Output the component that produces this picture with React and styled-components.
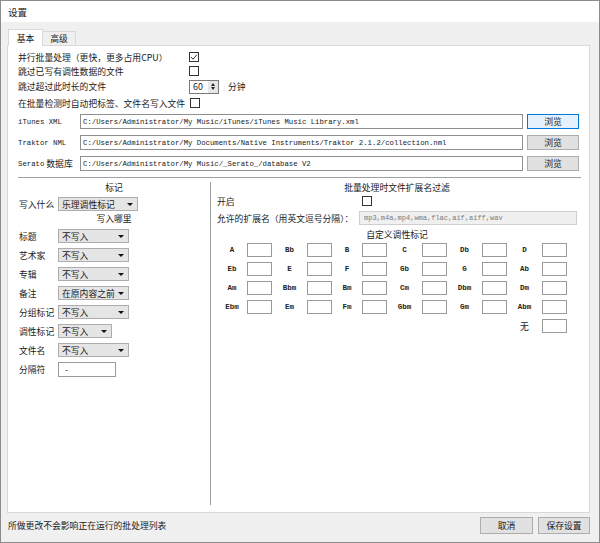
import styled, { createGlobalStyle } from "styled-components"

const GlobalStyle = createGlobalStyle`
html, body {
  margin: 0;
  padding: 0;
  background: #f0f0f0;
}
body {
  font-family: "Noto Sans CJK SC", "Noto Sans", sans-serif;
  font-size: 8.8px;
  color: #1a1a1a;
}
`

const Window = styled.div`
width: 600px;
height: 543px;
box-sizing: border-box;
border: 1px solid #8c8c8c;
background: #f0f0f0;
display: flex;
flex-direction: column;
`
const TitleBar = styled.div`
height: 21px;
flex: none;
background: #fff;
display: flex;
align-items: center;
padding-left: 7px;
font-size: 9.5px;
`
const Body = styled.div`
flex: 1;
display: flex;
flex-direction: column;
padding: 0 9px 0 6px;
min-height: 0;
`
const TabStrip = styled.div`
height: 23px;
flex: none;
display: flex;
align-items: flex-end;
padding-left: 1px;
`
const Tab = styled.div`
box-sizing: border-box;
height: ${p => (p.$active ? "17px" : "14px")};
width: ${p => (p.$active ? "35px" : "33px")};
background: ${p => (p.$active ? "#fff" : "#f0f0f0")};
border: 1px solid #d9d9d9;
border-bottom: none;
border-left: ${p => (p.$active ? "1px solid #d9d9d9" : "none")};
margin-bottom: ${p => (p.$active ? "-1px" : "0")};
position: relative;
z-index: ${p => (p.$active ? 1 : 0)};
display: flex;
align-items: center;
justify-content: center;
`
const Panel = styled.div`
flex: 1;
background: #fff;
border: 1px solid #d9d9d9;
display: flex;
flex-direction: column;
padding: 4px 10px 0 10px;
min-height: 0;
`
const Options = styled.div`
display: grid;
grid-template-columns: 171px auto;
grid-template-rows: 14px 14px 17px 16px;
align-items: center;
justify-items: start;
`
const Check = styled.div`
width: 10px;
height: 10px;
box-sizing: border-box;
border: 1px solid #333;
background: #fff;
margin-left: ${p => p.$offset || 0}px;
display: flex;
align-items: center;
justify-content: center;
`
const SpinRow = styled.div`
display: flex;
align-items: center;
`
const Spin = styled.div`
width: 30px;
height: 14px;
box-sizing: border-box;
border: 1px solid #7a7a7a;
display: flex;
align-items: center;
padding-left: 3px;
`
const SpinValue = styled.span`
flex: 1;
`
const SpinArrows = styled.div`
width: 10px;
height: 12px;
background: #e6e6e6;
display: flex;
flex-direction: column;
align-items: center;
justify-content: center;
gap: 1px;
`
const Arrow = styled.div`
width: 0;
height: 0;
border-left: 2.5px solid transparent;
border-right: 2.5px solid transparent;
border-top: ${p => (p.$up ? "none" : "3px solid #222")};
border-bottom: ${p => (p.$up ? "3px solid #222" : "none")};
`
const Unit = styled.span`
margin-left: 9px;
`
const PathRows = styled.div`
display: flex;
flex-direction: column;
gap: 6px;
margin-top: 3px;
`
const PathRow = styled.div`
height: 15px;
display: flex;
align-items: center;
`
const Mono = styled.span`
font-family: "Liberation Mono", monospace;
font-size: 7.3px;
`
const PathLabel = styled.div`
width: 62px;
flex: none;
display: flex;
align-items: center;
gap: 2px;
white-space: nowrap;
`
const PathInput = styled.div`
flex: 1;
height: 15px;
box-sizing: border-box;
border: 1px solid #8f8f8f;
padding: 0 2px;
display: flex;
align-items: center;
white-space: nowrap;
overflow: hidden;
font-family: "Liberation Mono", monospace;
font-size: 7.3px;
`
const Button = styled.div`
width: ${p => p.$width}px;
height: ${p => p.$height || 15}px;
box-sizing: border-box;
margin-left: ${p => p.$gap || 0}px;
background: ${p => (p.$focus ? "#e5f1fb" : "#e1e1e1")};
border: 1px solid ${p => (p.$focus ? "#0078d7" : "#adadad")};
display: flex;
align-items: center;
justify-content: center;
flex: none;
`
const HLine = styled.div`
margin-top: 6px;
margin-right: -2px;
border-top: 1px solid #a0a0a0;
`
const Lower = styled.div`
flex: 1;
display: flex;
padding-bottom: 7px;
min-height: 0;
`
const LeftCol = styled.div`
width: 192px;
flex: none;
display: flex;
flex-direction: column;
padding-top: 3px;
`
const VLine = styled.div`
width: 0;
border-left: 1px solid #a0a0a0;
margin-top: 4px;
`
const RightCol = styled.div`
flex: 1;
display: flex;
flex-direction: column;
padding: 3px 2px 0 6px;
`
const SectionTitle = styled.div`
height: 14px;
line-height: 14px;
text-align: center;
margin-top: ${p => p.$mt || 0}px;
`
const FieldRow = styled.div`
height: 14px;
display: flex;
align-items: center;
margin-top: ${p => p.$mt || 0}px;
`
const FieldLabel = styled.div`
width: 39px;
padding-left: 1px;
flex: none;
white-space: nowrap;
`
const Select = styled.div`
width: ${p => p.$width}px;
height: 14px;
box-sizing: border-box;
background: #e5e5e5;
border: 1px solid #adadad;
padding: 0 4px 0 3px;
display: flex;
align-items: center;
justify-content: space-between;
`
const Caret = styled.div`
width: 0;
height: 0;
border-left: 3px solid transparent;
border-right: 3px solid transparent;
border-top: 3px solid #111;
`
const TextBox = styled.div`
width: ${p => p.$width}px;
height: ${p => p.$height || 14}px;
box-sizing: border-box;
border: 1px solid #9a9a9a;
background: #fff;
padding-left: 6px;
display: flex;
align-items: center;
`
const FilterRow = styled.div`
height: ${p => p.$height}px;
display: flex;
align-items: center;
margin-top: ${p => p.$mt || 0}px;
`
const FilterLabel = styled.div`
width: 142px;
flex: none;
white-space: nowrap;
`
const ExtInput = styled.div`
flex: 1;
height: 14px;
box-sizing: border-box;
border: 1px solid #cfcfcf;
background: #f0f0f0;
color: #7a7a7a;
padding-left: 4px;
display: flex;
align-items: center;
font-family: "Liberation Mono", monospace;
font-size: 7px;
`
const KeyGrid = styled.div`
display: grid;
grid-template-columns: 30px 25px 35px 25px 30px 25px 35px 25px 35px 25px 35px 25px;
grid-auto-rows: 14px;
row-gap: 5px;
margin-top: 1px;
align-items: center;
`
const KeyLabel = styled.div`
text-align: center;
font-family: ${p => (p.$cjk ? "\"Noto Sans CJK SC\", sans-serif" : "\"Liberation Mono\", monospace")};
font-size: ${p => (p.$cjk ? "8.8px" : "7.5px")};
font-weight: ${p => (p.$cjk ? "normal" : "bold")};
grid-column: ${p => p.$col || "auto"};
color: #222;
`
const KeyBox = styled.div`
height: 14px;
box-sizing: border-box;
border: 1px solid #9a9a9a;
background: #fff;
`
const Footer = styled.div`
height: 29px;
flex: none;
display: flex;
justify-content: space-between;
align-items: flex-start;
padding: 4px 0 0 1px;
box-sizing: border-box;
`
const Status = styled.div`
line-height: 17px;
`
const FooterButtons = styled.div`
display: flex;
`

const paths = [
  { label: <Mono>iTunes XML</Mono>, value: "C:/Users/Administrator/My Music/iTunes/iTunes Music Library.xml", focus: true },
  { label: <Mono>Traktor NML</Mono>, value: "C:/Users/Administrator/My Documents/Native Instruments/Traktor 2.1.2/collection.nml" },
  { label: <><Mono>Serato</Mono><span>数据库</span></>, value: "C:/Users/Administrator/My Music/_Serato_/database V2" },
]

const fields = [
  { label: "标题", value: "不写入", width: 71 },
  { label: "艺术家", value: "不写入", width: 71 },
  { label: "专辑", value: "不写入", width: 71 },
  { label: "备注", value: "在原内容之前", width: 71 },
  { label: "分组标记", value: "不写入", width: 71 },
  { label: "调性标记", value: "不写入", width: 54 },
  { label: "文件名", value: "不写入", width: 71 },
]

const keys = [
  "A", "Bb", "B", "C", "Db", "D",
  "Eb", "E", "F", "Gb", "G", "Ab",
  "Am", "Bbm", "Bm", "Cm", "Dbm", "Dm",
  "Ebm", "Em", "Fm", "Gbm", "Gm", "Abm",
]

const CheckBox = ({ checked, offset }) => (
  <Check $offset={offset}>
    {checked && (
      <svg width="8" height="8" viewBox="0 0 8 8">
        <polyline points="1,4 3,6.2 7,1.6" fill="none" stroke="#333" strokeWidth="1" />
      </svg>
    )}
  </Check>
)

const KeyCell = ({ name }) => (
  <>
    <KeyLabel>{name}</KeyLabel>
    <KeyBox />
  </>
)

export default function App() {
  return (
    <>
      <GlobalStyle />
      <Window>
        <TitleBar>设置</TitleBar>
        <Body>
          <TabStrip>
            <Tab $active>基本</Tab>
            <Tab>高级</Tab>
          </TabStrip>
          <Panel>
            <Options>
              <span>并行批量处理（更快，更多占用CPU）</span>
              <CheckBox checked />
              <span>跳过已写有调性数据的文件</span>
              <CheckBox />
              <span>跳过超过此时长的文件</span>
              <SpinRow>
                <Spin>
                  <SpinValue>60</SpinValue>
                  <SpinArrows>
                    <Arrow $up />
                    <Arrow />
                  </SpinArrows>
                </Spin>
                <Unit>分钟</Unit>
              </SpinRow>
              <span>在批量检测时自动把标签、文件名写入文件</span>
              <CheckBox offset={1} />
            </Options>

            <PathRows>
              {paths.map((p, i) => (
                <PathRow key={i}>
                  <PathLabel>{p.label}</PathLabel>
                  <PathInput>{p.value}</PathInput>
                  <Button $width={52} $gap={4} $focus={p.focus}>浏览</Button>
                </PathRow>
              ))}
            </PathRows>

            <HLine />

            <Lower>
              <LeftCol>
                <SectionTitle>标记</SectionTitle>
                <FieldRow $mt={2}>
                  <FieldLabel>写入什么</FieldLabel>
                  <Select $width={80}>
                    <span>乐理调性标记</span>
                    <Caret />
                  </Select>
                </FieldRow>
                <SectionTitle $mt={1}>写入哪里</SectionTitle>
                {fields.map((f, i) => (
                  <FieldRow key={f.label} $mt={i === 0 ? 3 : 5}>
                    <FieldLabel>{f.label}</FieldLabel>
                    <Select $width={f.width}>
                      <span>{f.value}</span>
                      <Caret />
                    </Select>
                  </FieldRow>
                ))}
                <FieldRow $mt={5}>
                  <FieldLabel>分隔符</FieldLabel>
                  <TextBox $width={58} $height={15}>-</TextBox>
                </FieldRow>
              </LeftCol>

              <VLine />

              <RightCol>
                <SectionTitle>批量处理时文件扩展名过滤</SectionTitle>
                <FilterRow $height={12}>
                  <FilterLabel>开启</FilterLabel>
                  <CheckBox offset={3} />
                </FilterRow>
                <FilterRow $height={14} $mt={4}>
                  <FilterLabel>允许的扩展名（用英文逗号分隔）：</FilterLabel>
                  <ExtInput>mp3,m4a,mp4,wma,flac,aif,aiff,wav</ExtInput>
                </FilterRow>
                <SectionTitle $mt={3}>自定义调性标记</SectionTitle>
                <KeyGrid>
                  {keys.map(k => (
                    <KeyCell key={k} name={k} />
                  ))}
                  <KeyLabel $cjk $col={11}>无</KeyLabel>
                  <KeyBox />
                </KeyGrid>
              </RightCol>
            </Lower>
          </Panel>
          <Footer>
            <Status>所做更改不会影响正在运行的批处理列表</Status>
            <FooterButtons>
              <Button $width={53} $height={17}>取消</Button>
              <Button $width={52} $height={17} $gap={5}>保存设置</Button>
            </FooterButtons>
          </Footer>
        </Body>
      </Window>
    </>
  )
}
